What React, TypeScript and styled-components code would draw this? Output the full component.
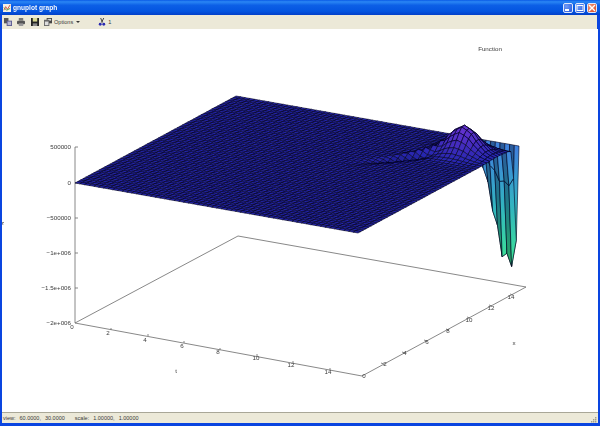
import * as React from "react";
import styled, { createGlobalStyle } from "styled-components";

const GlobalStyle = createGlobalStyle`
  html, body {
    margin: 0;
    padding: 0;
    background: #ffffff;
    font-family: "Liberation Sans", Arial, sans-serif;
  }
`;

const Window = styled.div`
  width: 600px;
  height: 426px;
  box-sizing: border-box;
  display: flex;
  flex-direction: column;
  background: #0a45e0;
  padding: 0 2px 3px;
  overflow: hidden;
`;

const TitleBar = styled.div`
  height: 15px;
  margin: 0 -2px;
  padding: 0 3px 0 3px;
  display: flex;
  align-items: center;
  gap: 2px;
  flex-shrink: 0;
  background: linear-gradient(180deg, #0a5ae6 0%, #2a86f4 12%, #0c5fe6 35%, #0455e0 75%, #0340c8 100%);
`;

const TitleText = styled.span`
  color: #ffffff;
  font-size: 6.6px;
  font-weight: bold;
  flex: 1;
  opacity: 0.95;
`;

const CaptionButtons = styled.div`
  display: flex;
  gap: 2px;
`;

const CaptionButton = styled.div<{ $close?: boolean }>`
  width: 10px;
  height: 10px;
  box-sizing: border-box;
  border: 1px solid #dfe8fb;
  border-radius: 2px;
  display: flex;
  align-items: center;
  justify-content: center;
  background: ${(p) =>
    p.$close
      ? "radial-gradient(circle at 30% 30%, #f09a7c, #d8441c)"
      : "radial-gradient(circle at 30% 30%, #6f9bf5, #2556dc)"};
`;

const Toolbar = styled.div`
  height: 14px;
  flex-shrink: 0;
  margin-right: 1px;
  display: flex;
  align-items: center;
  padding-left: 2px;
  background: #ece9d8;
  color: #3a3a3a;
  font-size: 5.6px;
`;

const ToolIcon = styled.svg<{ $gap?: number }>`
  width: 8px;
  height: 8px;
  flex-shrink: 0;
  margin-right: ${(p) => p.$gap ?? 5}px;
`;

const OptionsLabel = styled.span`
  margin-right: 3px;
`;

const DropArrow = styled.span`
  width: 0;
  height: 0;
  border-left: 2px solid transparent;
  border-right: 2px solid transparent;
  border-top: 2px solid #333333;
  margin-right: 18px;
`;

const Plot = styled.div`
  flex: 1;
  min-height: 0;
  background: #ffffff;
`;

const PlotSvg = styled.svg`
  display: block;
  width: 596px;
  height: 383px;
`;

const Labels = styled.g`
  filter: grayscale(1);
`;

const AxisText = styled.text<{ $anchor?: string }>`
  font-family: "Liberation Sans", Arial, sans-serif;
  font-size: 6.2px;
  fill: #3c3c3c;
  text-anchor: ${(p) => p.$anchor ?? "middle"};
`;

const StatusBar = styled.div`
  height: 10px;
  flex-shrink: 0;
  display: flex;
  align-items: center;
  justify-content: space-between;
  padding: 0 1px;
  background: #ece9d8;
  border-top: 1px solid #a9a797;
  color: #3a3a3a;
  font-size: 5.5px;
`;

const StatusItems = styled.div`
  display: flex;
  gap: 4px;
`;

const StatusGap = styled.span`
  width: 2px;
`;

const Grip = styled.svg`
  width: 6px;
  height: 6px;
  align-self: flex-end;
`;

// surface: u runs along the t axis, v along the x axis, both 0..1
const N = 60;
const gauss = (a: number, c: number, s: number) => Math.exp(-((a - c) * (a - c)) / (s * s));

const height = (i: number, j: number) => {
  const u = i / N;
  const v = j / N;
  if (j === N) return 0;
  const zig = (i + j) % 2 ? 1 : 0.6;
  const peak = 27 * gauss(u, 0.885, 0.065) * gauss(v, 0.86, 0.06) * (i % 2 ? 1 : 0.96);
  const across = v - 0.71 - 1.1 * (u - 0.71);
  const ripple = 6 * gauss(across, 0, 0.018) * gauss(u, 0.78, 0.05) * zig;
  const dip = -4 * gauss(across, -0.04, 0.025) * gauss(u, 0.75, 0.07);
  const saw = i % 2 ? 1 : 0.88;
  const pit = -124 * gauss(u, 0.972, 0.072) * gauss(v, 0.985, 0.017) * saw;
  return peak + ripple + dip + pit;
};

const project = (i: number, j: number): [number, number] => {
  const u = i / N;
  const v = j / N;
  return [75 + u * 283 + v * 161, 183 + u * 50 - v * 87 - height(i, j)];
};

const mix = (a: number[], b: number[], t: number) =>
  `rgb(${a.map((c, k) => Math.round(c + (b[k] - c) * t)).join(",")})`;

const faceColor = (z: number, odd: boolean) => {
  if (z <= -8) return odd ? "url(#curtain)" : "url(#curtainDark)";
  if (z >= 0) return mix([38, 38, 176], [98, 50, 206], Math.min(z / 24, 1));
  if (z > -5) return mix([38, 38, 176], [20, 20, 96], -z / 5);
  return "#1a4a9c";
};

const buildFaces = () => {
  const faces: { d: string; fill: string; depth: number }[] = [];
  for (let i = 0; i < N; i++) {
    for (let j = 0; j < N; j++) {
      const pts = [project(i, j), project(i + 1, j), project(i + 1, j + 1), project(i, j + 1)];
      const z = (height(i, j) + height(i + 1, j) + height(i + 1, j + 1) + height(i, j + 1)) / 4;
      faces.push({
        d: "M" + pts.map((p) => `${p[0].toFixed(1)} ${p[1].toFixed(1)}`).join("L") + "Z",
        fill: faceColor(z, i % 2 === 1),
        depth: j - i,
      });
    }
  }
  return faces.sort((a, b) => b.depth - a.depth);
};

const zLabels = [
  { y: 147, s: "500000" },
  { y: 183, s: "0" },
  { y: 218, s: "\u2212500000" },
  { y: 253, s: "\u22121e+006" },
  { y: 288, s: "\u22121.5e+006" },
  { y: 323, s: "\u22122e+006" },
];

const tLabels = [
  { x: 72, y: 329, s: "0" },
  { x: 108, y: 335, s: "2" },
  { x: 145, y: 342, s: "4" },
  { x: 182, y: 348, s: "6" },
  { x: 218, y: 354, s: "8" },
  { x: 256, y: 360, s: "10" },
  { x: 291, y: 367, s: "12" },
  { x: 328, y: 374, s: "14" },
];

const xLabels = [
  { x: 364, y: 378, s: "0" },
  { x: 385, y: 366, s: "2" },
  { x: 405, y: 355, s: "4" },
  { x: 427, y: 344, s: "6" },
  { x: 448, y: 333, s: "8" },
  { x: 469, y: 322, s: "10" },
  { x: 491, y: 310, s: "12" },
  { x: 511, y: 299, s: "14" },
];

const GraphIcon = () => (
  <svg width="8" height="8" viewBox="0 0 9 9">
    <rect width="9" height="9" fill="#f4f0e4" />
    <path d="M1 7L3 3L5 6L8 1" stroke="#d04a3a" fill="none" />
    <path d="M1 4L4 7L8 5" stroke="#4a9a4a" fill="none" />
  </svg>
);

const App = () => {
  const faces = React.useMemo(buildFaces, []);

  return (
    <Window>
      <GlobalStyle />
      <TitleBar>
        <GraphIcon />
        <TitleText>gnuplot graph</TitleText>
        <CaptionButtons>
          <CaptionButton>
            <svg width="8" height="8" viewBox="0 0 8 8">
              <rect x="1" y="5" width="4" height="2" fill="#fff" />
            </svg>
          </CaptionButton>
          <CaptionButton>
            <svg width="8" height="8" viewBox="0 0 8 8">
              <rect x="1" y="1.5" width="6" height="5" fill="none" stroke="#fff" />
            </svg>
          </CaptionButton>
          <CaptionButton $close>
            <svg width="8" height="8" viewBox="0 0 8 8">
              <path d="M1 1L7 7M7 1L1 7" stroke="#fff" strokeWidth="1.4" />
            </svg>
          </CaptionButton>
        </CaptionButtons>
      </TitleBar>
      <Toolbar>
        <ToolIcon viewBox="0 0 9 9" $gap={5}>
          <rect x="0" y="0" width="5" height="6" fill="#555" />
          <rect x="3" y="3" width="6" height="6" fill="#5a5a90" />
          <rect x="4" y="4" width="4" height="4" fill="#b8b8d0" />
        </ToolIcon>
        <ToolIcon viewBox="0 0 9 9" $gap={6}>
          <rect x="2" y="0" width="5" height="3" fill="#777" />
          <rect x="0" y="3" width="9" height="4" rx="1" fill="#555" />
          <rect x="2" y="6" width="5" height="3" fill="#999" />
        </ToolIcon>
        <ToolIcon viewBox="0 0 9 9" $gap={5}>
          <rect width="9" height="9" fill="#222" />
          <rect x="2" y="0" width="5" height="4" fill="#d8d890" />
          <rect x="2" y="6" width="5" height="3" fill="#888" />
        </ToolIcon>
        <ToolIcon viewBox="0 0 9 9" $gap={2}>
          <rect x="3" y="0" width="6" height="6" fill="#444" />
          <rect x="4" y="1" width="4" height="2" fill="#ddd" />
          <rect x="0" y="2" width="6" height="7" fill="#666" />
          <rect x="1" y="4" width="4" height="4" fill="#ddd" />
        </ToolIcon>
        <OptionsLabel>Options</OptionsLabel>
        <DropArrow />
        <ToolIcon viewBox="0 0 9 9" $gap={2}>
          <path d="M3 0L5 5M6.5 0L4 5" stroke="#333" fill="none" />
          <circle cx="2.5" cy="7" r="1.6" fill="#2a2ab0" />
          <circle cx="6.5" cy="7" r="1.6" fill="#2a2ab0" />
        </ToolIcon>
        <span>1</span>
      </Toolbar>
      <Plot>
        <PlotSvg viewBox="2 29 596 383">
          <defs>
            <linearGradient id="curtain" gradientUnits="userSpaceOnUse" x1="0" y1="150" x2="0" y2="262">
              <stop offset="0" stopColor="#3f82dc" />
              <stop offset="0.5" stopColor="#32b4c0" />
              <stop offset="1" stopColor="#3ce494" />
            </linearGradient>
            <linearGradient id="curtainDark" gradientUnits="userSpaceOnUse" x1="0" y1="150" x2="0" y2="262">
              <stop offset="0" stopColor="#2a5c9c" />
              <stop offset="0.5" stopColor="#1f7c86" />
              <stop offset="1" stopColor="#28a868" />
            </linearGradient>
          </defs>
          <g stroke="#6a6a6a" strokeWidth="0.8" fill="none">
            <path d="M75 323L238 236L526 287L362 376Z" />
            <path d="M75 147V323" />
            <path d="M75 147h3M75 183h3M75 218h3M75 253h3M75 288h3" />
            <path d="M111 330l0 -2M148 336l0 -2M184 343l0 -2M220 350l0 -2M257 356l0 -2M293 363l0 -2M330 370l0 -2" />
            <path d="M384 364l-3 -1M405 353l-3 -1M427 341l-3 -1M449 330l-3 -1M470 318l-3 -1M492 306l-3 -1M513 295l-3 -1" />
          </g>
          <g stroke="#00001c" strokeWidth="0.6" strokeLinejoin="round">
            {faces.map((f, k) => (
              <path key={k} d={f.d} fill={f.fill} />
            ))}
          </g>
          <Labels>
            {zLabels.map((l) => (
              <AxisText key={l.s} x={71} y={l.y + 2} $anchor="end">
                {l.s}
              </AxisText>
            ))}
            {tLabels.map((l) => (
              <AxisText key={l.s} x={l.x} y={l.y}>
                {l.s}
              </AxisText>
            ))}
            {xLabels.map((l) => (
              <AxisText key={l.s} x={l.x} y={l.y}>
                {l.s}
              </AxisText>
            ))}
            <AxisText x={2.5} y={225}>
              z
            </AxisText>
            <AxisText x={176} y={373}>
              t
            </AxisText>
            <AxisText x={514} y={345}>
              x
            </AxisText>
            <AxisText x={490} y={51}>
              Function
            </AxisText>
          </Labels>
        </PlotSvg>
      </Plot>
      <StatusBar>
        <StatusItems>
          <span>view:</span>
          <span>60.0000,</span>
          <span>30.0000</span>
          <StatusGap />
          <span>scale:</span>
          <span>1.00000,</span>
          <span>1.00000</span>
        </StatusItems>
        <Grip viewBox="0 0 6 6">
          <path d="M4 0h1.4v1.4H4zM2 2h1.4v1.4H2zM4 2h1.4v1.4H4zM0 4h1.4v1.4H0zM2 4h1.4v1.4H2zM4 4h1.4v1.4H4z" fill="#a09e8c" />
        </Grip>
      </StatusBar>
    </Window>
  );
};

export default App;
